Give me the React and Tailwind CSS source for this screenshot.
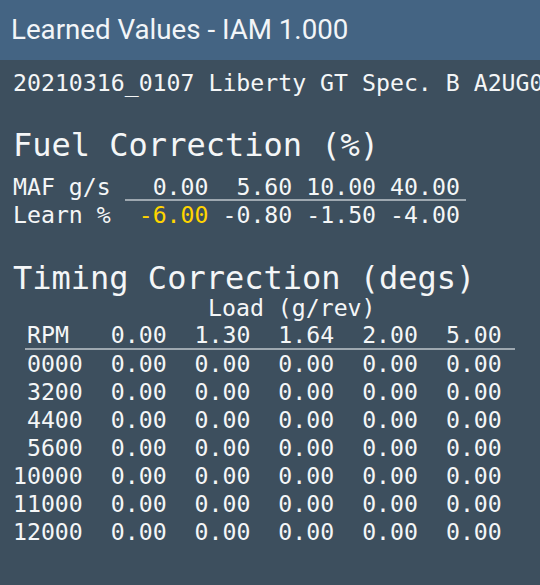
import React from "react";

const mono = { fontFamily: '"DejaVu Sans Mono", "Liberation Mono", monospace' };

const loads = ["0.00", "1.30", "1.64", "2.00", "5.00"];
const rpms = ["0000", "3200", "4400", "5600", "10000", "11000", "12000"];
const maf = ["0.00", "5.60", "10.00", "40.00"];
const learn = ["-6.00", "-0.80", "-1.50", "-4.00"];

export default function App() {
  return (
    <div className="w-[540px] h-[585px] overflow-hidden bg-[#3d4f5e] text-[#f4f6f7]">
      {/* Title bar */}
      <div className="h-[60px] bg-[#446483] flex items-center px-[11px]">
        <span className="text-[27.7px] leading-[32px] font-['Roboto'] text-[#f2f5f8]">Learned Values - IAM 1.000</span>
      </div>

      <div className="px-[13px] text-[23.2px]" style={mono}>
        <div className="mt-[8px] leading-[29px] whitespace-pre">20210316_0107 Liberty GT Spec. B A2UG0</div>

        {/* Fuel correction */}
        <div className="mt-[29px] text-[32px] leading-[38px]">Fuel Correction (%)</div>
        <div className="mt-[9px] grid grid-cols-[111.7px_83.8px_83.8px_83.8px_89.8px] whitespace-pre">
          <div className="h-[26px] leading-[28px]">MAF g/s</div>
          {maf.map((v, i) => (
            <div
              key={v}
              className={`h-[28px] leading-[28px] text-right border-b-2 border-[#9ea8b0] ${i === 3 ? "pr-[6px]" : ""}`}
            >
              {v}
            </div>
          ))}
          <div className="leading-[28px]">Learn %</div>
          {learn.map((v, i) => (
            <div
              key={v}
              className={`leading-[28px] text-right ${i === 0 ? "text-[#ffd500]" : ""} ${i === 3 ? "pr-[6px]" : ""}`}
            >
              {v}
            </div>
          ))}
        </div>

        {/* Timing correction */}
        <div className="mt-[33px] text-[32px] leading-[32px]">Timing Correction (degs)</div>
        <div className="leading-[27px] pl-[195px]">Load (g/rev)</div>
        <div className="ml-[12px] w-[490px]">
          <div className="grid grid-cols-[57.8px_83.8px_83.8px_83.8px_83.8px_98.8px] border-b-2 border-[#9ea8b0]">
            <div className="h-[27px] leading-[27px] pl-[2px]">RPM</div>
            {loads.map((v, i) => (
              <div key={v} className={`leading-[27px] text-right ${i === 4 ? "pr-[15px]" : ""}`}>
                {v}
              </div>
            ))}
          </div>
          {rpms.map((r) => (
            <div key={r} className="grid grid-cols-[57.8px_83.8px_83.8px_83.8px_83.8px_98.8px] leading-[28px]">
              <div className="flex justify-end">
                <span>{r}</span>
              </div>
              {loads.map((v, i) => (
                <div key={v} className={`text-right ${i === 4 ? "pr-[15px]" : ""}`}>
                  0.00
                </div>
              ))}
            </div>
          ))}
        </div>
      </div>
    </div>
  );
}
